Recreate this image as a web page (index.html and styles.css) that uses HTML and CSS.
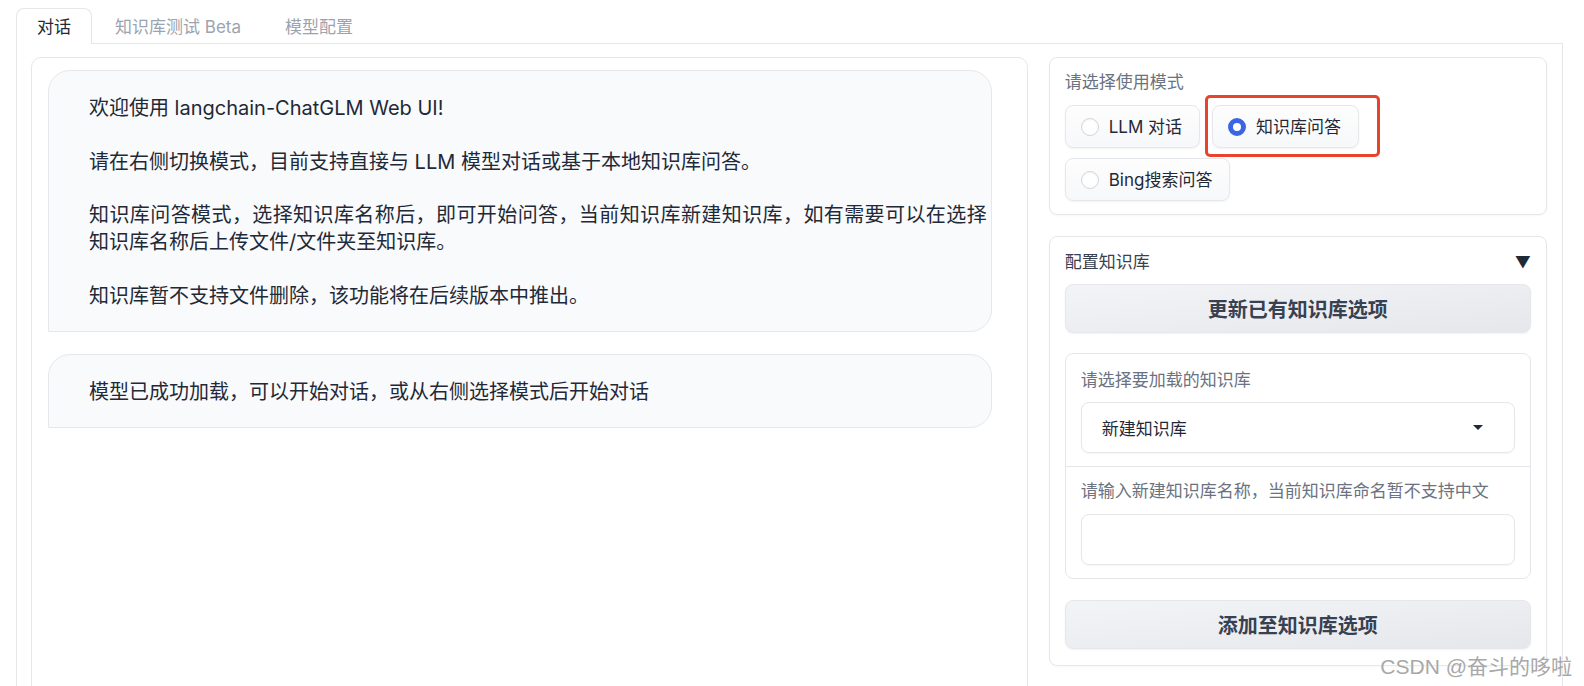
FILE: index.html
```html
<!DOCTYPE html>
<html lang="zh-CN">
<head>
<meta charset="utf-8">
<title>langchain-ChatGLM</title>
<link rel="stylesheet" href="styles.css">
</head>
<body>
<div class="app">
  <div class="tab-nav">
    <button class="tab active">对话</button>
    <button class="tab">知识库测试 Beta</button>
    <button class="tab">模型配置</button>
  </div>
  <div class="tab-panel">
    <div class="row">
      <div class="chat-col">
        <div class="chatbot">
          <div class="bubble">
            <p>欢迎使用 langchain-ChatGLM Web UI!</p>
            <p>请在右侧切换模式，目前支持直接与 LLM 模型对话或基于本地知识库问答。</p>
            <p>知识库问答模式，选择知识库名称后，即可开始问答，当前知识库新建知识库，如有需要可以在选择知识库名称后上传文件/文件夹至知识库。</p>
            <p>知识库暂不支持文件删除，该功能将在后续版本中推出。</p>
          </div>
          <div class="bubble">
            <p>模型已成功加载，可以开始对话，或从右侧选择模式后开始对话</p>
          </div>
        </div>
      </div>
      <div class="side-col">
        <div class="block radio-block">
          <div class="label">请选择使用模式</div>
          <div class="radio-group">
            <label class="radio"><span class="dot"></span><span>LLM 对话</span></label>
            <label class="radio"><span class="dot checked"></span><span>知识库问答</span><span class="highlight"></span></label>
            <label class="radio"><span class="dot"></span><span>Bing搜索问答</span></label>
          </div>
        </div>
        <div class="block accordion">
          <div class="acc-head"><span>配置知识库</span><span class="caret">▼</span></div>
          <button class="btn">更新已有知识库选项</button>
          <div class="group">
            <div class="group-item">
              <div class="label">请选择要加载的知识库</div>
              <div class="dropdown"><span>新建知识库</span><span class="arrow"></span></div>
            </div>
            <div class="group-item sep">
              <div class="label label-b">请输入新建知识库名称，当前知识库命名暂不支持中文</div>
              <div class="textbox"></div>
            </div>
          </div>
          <button class="btn btn-add">添加至知识库选项</button>
        </div>
      </div>
    </div>
  </div>
  <div class="watermark">CSDN @奋斗的哆啦</div>
</div>
</body>
</html>
```
FILE: styles.css
```css
* { box-sizing: border-box; }
html, body { margin: 0; padding: 0; background: #fff; }
body {
  font-family: "Inter", "Noto Sans CJK SC", sans-serif;
  color: #1f2937;
  overflow: hidden;
  height: 686px;
}
.app { padding: 8px 21px 0 16px; position: relative; height: 686px; }

.tab-nav { display: flex; height: 36px; position: relative; z-index: 1; margin-bottom: -1px; }
.tab {
  font-family: inherit; font-size: 17px; line-height: 24px;
  background: transparent; border: 1px solid transparent; border-bottom: none;
  border-radius: 8px 8px 0 0; padding: 0 20px 0 20px; margin-right: 2px;
  color: #9ca3af; height: 36px; cursor: pointer;
}
.tab.active { color: #1f2937; background: #fff; border-color: #e5e7eb; height: 36px; }

.tab-panel {
  border: 1px solid #e5e7eb; border-bottom: none;
  padding: 13px 15px 0 14px; height: 700px;
}
.row { display: flex; gap: 21px; align-items: flex-start; }
.chat-col { flex: 2 1 0; min-width: 0; }
.side-col { flex: 1 1 0; min-width: 0; display: flex; flex-direction: column; gap: 21px; }

.chatbot {
  border: 1px solid #e5e7eb; border-radius: 10px;
  padding: 12px 16px; height: 700px;
}
.bubble {
  margin-right: 19px; margin-bottom: 22px;
  background: #f9fafb; border: 1px solid #e5e7eb;
  border-radius: 22px 22px 22px 0;
  padding: 24px 4px 21px 40px;
  font-size: 20px; line-height: 27px; color: #1f2937;
  text-align: justify;
}
.bubble p { margin: 0 0 26.5px; }
.bubble p:last-child { margin-bottom: 0; }

.block {
  border: 1px solid #e5e7eb; border-radius: 8px; background: #fff;
  box-shadow: 0 1px 2px rgba(0,0,0,0.03);
}
.label { font-size: 17px; line-height: 24px; color: #6b7280; }

.radio-block { padding: 12px 15px 13px 15px; }
.radio-block .label { margin-bottom: 11px; }
.radio-group { display: flex; flex-wrap: wrap; gap: 10px 12px; }
.radio {
  position: relative; display: inline-flex; align-items: center; gap: 10px;
  height: 43px; padding: 0 17px 0 15px;
  border: 1px solid #e5e7eb; border-radius: 8px;
  background: linear-gradient(to bottom, #fdfdfd, #f7f8fa);
  box-shadow: 0 1px 2px rgba(0,0,0,0.05);
  font-size: 17px; line-height: 24px; color: #1f2937;
}
.dot {
  width: 18px; height: 18px; border-radius: 50%;
  border: 1px solid #d1d5db; background: #fff;
  box-shadow: inset 0 1px 2px rgba(0,0,0,0.05);
  flex: none;
}
.dot.checked { border: 5px solid #3b66e3; background: #fff; box-shadow: none; }
.highlight {
  position: absolute; top: -11px; left: -8px; right: -22px; bottom: -10px;
  border: 3px solid #e8432d; border-radius: 5px; pointer-events: none;
}

.accordion { padding: 13px 15px 16px; }
.acc-head {
  display: flex; justify-content: space-between; align-items: center;
  font-size: 17px; line-height: 24px; color: #374151; margin-bottom: 10px;
}
.caret { font-size: 16px; color: #1f2937; margin-right: 0; }
.btn {
  display: block; width: 100%; height: 49px;
  font-family: inherit; font-size: 20px; font-weight: 600; color: #374151;
  border: 1px solid #e5e7eb; border-radius: 8px;
  background: linear-gradient(to bottom right, #f3f4f6, #e5e7eb);
  box-shadow: 0 1px 2px rgba(0,0,0,0.05);
}
.group { margin-top: 20px; border: 1px solid #e5e7eb; border-radius: 8px; }
.group-item { padding: 14px 15px 13px; }
.group-item .label { margin-bottom: 10px; }
.group-item.sep { border-top: 1px solid #e5e7eb; padding-top: 12px; }
.group-item .label-b { margin-bottom: 11px; }
.dropdown {
  height: 51px; border: 1px solid #e5e7eb; border-radius: 8px; background: #fff;
  box-shadow: 0 1px 2px rgba(0,0,0,0.04);
  display: flex; align-items: center; justify-content: space-between;
  padding: 0 31px 0 20px; font-size: 17px; color: #1f2937;
}
.arrow {
  width: 0; height: 0; border-left: 5px solid transparent; border-right: 5px solid transparent;
  border-top: 5px solid #1f2937;
}
.textbox {
  height: 51px; border: 1px solid #e5e7eb; border-radius: 8px; background: #fff;
  box-shadow: 0 1px 2px rgba(0,0,0,0.04);
}
.btn-add { margin-top: 21px; }

.watermark {
  position: absolute; right: 12px; bottom: 5px;
  font-family: "Liberation Sans", "Noto Sans CJK SC", sans-serif;
  font-size: 21px; line-height: 28px; color: #a8a8a8;
  text-shadow: 0 0 2px #fff;
}
```
